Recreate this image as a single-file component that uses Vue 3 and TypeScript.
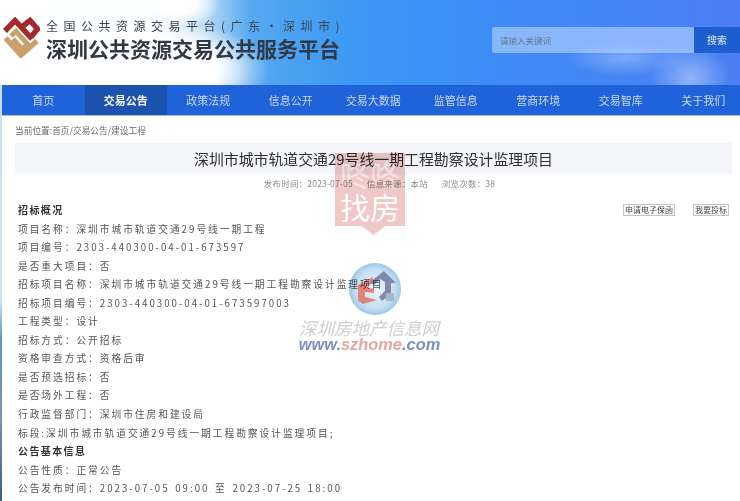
<script setup lang="ts">
const navItems = ['首页', '交易公告', '政策法规', '信息公开', '交易大数据', '监管信息', '营商环境', '交易智库', '关于我们']

const overview = [
  '项目名称：深圳市城市轨道交通29号线一期工程',
  '项目编号：2303-440300-04-01-673597',
  '是否重大项目：否',
  '招标项目名称：深圳市城市轨道交通29号线一期工程勘察设计监理项目',
  '招标项目编号：2303-440300-04-01-673597003',
  '工程类型：设计',
  '招标方式：公开招标',
  '资格审查方式：资格后审',
  '是否预选招标：否',
  '是否场外工程：否',
  '行政监督部门：深圳市住房和建设局',
  '标段:深圳市城市轨道交通29号线一期工程勘察设计监理项目;',
]

const notice = ['公告性质：正常公告', '公告发布时间：2023-07-05 09:00 至 2023-07-25 18:00']
</script>

<template>
  <div class="page">
    <header class="top">
      <div class="brand">
        <svg class="logo" width="38" height="42" viewBox="0 0 38 42" fill="none">
          <path d="M3 14 L13 3.5 L30 22" stroke="#a4282c" stroke-width="5.5" />
          <path d="M21 9 L28 3.5 L35.5 12 L29 20" stroke="#a4282c" stroke-width="5.5" />
          <path d="M3.5 21 L19 38 L35 24" stroke="#c9a06c" stroke-width="5.5" />
          <path d="M9 19 L14 14.5 L25.5 27 L20 32 L11 22" stroke="#c9a06c" stroke-width="5" />
        </svg>
        <div>
          <div class="brand-sub">全国公共资源交易平台(广东·深圳市)</div>
          <div class="brand-main">深圳公共资源交易公共服务平台</div>
        </div>
      </div>
      <div class="search">
        <div class="search-input">请输入关键词</div>
        <div class="search-btn">搜索</div>
      </div>
    </header>

    <div class="body">
      <nav class="nav">
        <a v-for="(item, i) in navItems" :key="item" :class="['nav-item', { active: i === 1 }]">{{ item }}</a>
      </nav>

      <main class="main">
        <div class="crumb">当前位置:首页/交易公告/建设工程</div>
        <h1 class="title">深圳市城市轨道交通29号线一期工程勘察设计监理项目</h1>
        <div class="meta">
          <span>发布时间：2023-07-05</span>
          <span>信息来源：本站</span>
          <span>浏览次数：38</span>
        </div>

        <div class="content">
          <div class="head-row">
            <div class="row strong">招标概况</div>
            <div class="actions">
              <span class="action">申请电子保函</span>
              <span class="action">我要投标</span>
            </div>
          </div>
          <div v-for="line in overview" :key="line" class="row">{{ line }}</div>
          <div class="row strong">公告基本信息</div>
          <div v-for="line in notice" :key="line" class="row">{{ line }}</div>
        </div>
      </main>
    </div>

    <!-- watermarks lie over the page -->
    <div class="shield">
      <span class="shield-small">咚咚</span>
      <span>找房</span>
    </div>
    <div class="badge">
      <svg width="52" height="52" viewBox="0 0 52 52">
        <defs>
          <radialGradient id="orb" cx="50%" cy="50%" r="50%">
            <stop offset="0%" stop-color="#eef5fb" />
            <stop offset="75%" stop-color="#c6dff1" />
            <stop offset="100%" stop-color="#9cc7e6" />
          </radialGradient>
        </defs>
        <circle cx="26" cy="26" r="26" fill="url(#orb)" />
        <path d="M9 22 L24 14 L24 20 L17 24 L25 26 L25 30 L16 29 L16 34 L28 37 L14 41 L9 38 Z" fill="#e0857c" />
        <path d="M21 19 L35 8 L47 20 L42 20 L42 31 L33 38 L30 34 L36 28 L36 19 L31 16 L25 22 Z" fill="#7d8cae" />
        <path d="M37 30 h8 v8 h-8 Z" fill="#a6b6c6" />
      </svg>
      <div class="badge-cn">深圳房地产信息网</div>
      <div class="badge-url">www.<em>szhome</em>.com</div>
    </div>
  </div>
</template>

<style scoped>
.page {
  position: relative;
  width: 740px;
  height: 501px;
  overflow: hidden;
  font-family: "Noto Sans CJK SC", "Noto Sans", sans-serif;
  background: linear-gradient(180deg, #bfe0f5 0, #cfe0f6 300px, #5f96c4 340px, #7c8fb0 420px, #3b5f80 501px);
  filter: blur(0.3px);
}

.top {
  height: 85px;
  display: flex;
  justify-content: space-between;
  align-items: flex-start;
  background:
    radial-gradient(ellipse 40px 34px at 690px 78px, rgba(255, 255, 255, 0.4), transparent),
    radial-gradient(ellipse 60px 18px at 625px 58px, rgba(255, 255, 255, 0.3), transparent),
    radial-gradient(ellipse 40px 24px at 180px 4px, #fff 40%, transparent),
    radial-gradient(ellipse 130px 52px at 140px 70px, #fff 60%, rgba(255, 255, 255, 0)),
    linear-gradient(90deg, #fff 0, #fbfdff 150px, #b9dcf6 205px, #56a8f0 250px, #3a97f3 360px, #3f8af6 520px, #4c7ff3 740px);
}

.brand {
  display: flex;
  align-items: flex-start;
  gap: 6px;
  padding: 17px 0 0 2px;
}

.logo {
  flex: none;
}

.brand-sub {
  font-size: 12px;
  line-height: 16px;
  margin-top: 1px;
  letter-spacing: 5.5px;
  color: #3c4650;
  white-space: nowrap;
}

.brand-main {
  font-size: 21px;
  line-height: 28px;
  font-weight: 700;
  color: #2f3a46;
  white-space: nowrap;
}

.search {
  display: flex;
  margin-top: 27px;
  height: 26px;
}

.search-input {
  width: 194px;
  padding-left: 8px;
  font-size: 8.5px;
  line-height: 26px;
  color: #66788f;
  background: rgba(180, 212, 255, 0.62);
  border-radius: 2px 0 0 2px;
}

.search-btn {
  width: 46px;
  font-size: 10px;
  line-height: 26px;
  text-align: center;
  color: #dfe9fa;
  background: #1e5fd0;
}

.body {
  margin-left: 2px;
  height: 416px;
  background: #fff;
}

.nav {
  display: flex;
  height: 30px;
  background: #2062d9;
  box-shadow: 0 1px 0 #a9bfdc;
}

.nav-item {
  flex: 0 0 82.5px;
  font-size: 11px;
  line-height: 30px;
  text-align: center;
  color: #c9d9f5;
}

.nav-item.active {
  font-weight: 700;
  color: #f4f7fd;
  background: #1b52ad;
}

.main {
  padding: 9px 8px 0 13px;
}

.crumb {
  font-size: 8.7px;
  line-height: 14px;
  color: #6a6a6a;
}

.title {
  margin: 5px 0 0;
  font-size: 14.9px;
  font-weight: 400;
  line-height: 31px;
  text-align: center;
  color: #2f2f2f;
  background: #f3f5f9;
}

.meta {
  display: flex;
  justify-content: center;
  gap: 14px;
  padding-left: 12px;
  font-size: 8.5px;
  line-height: 18px;
  letter-spacing: 0.2px;
  color: #8a8a8a;
}

.content {
  margin-top: 9px;
  padding: 0 3px;
}

.head-row {
  display: flex;
  justify-content: space-between;
  align-items: center;
}

.actions {
  display: flex;
  gap: 18px;
}

.action {
  padding: 0 1px;
  font-size: 8px;
  line-height: 10px;
  color: #444;
  border: 1px solid #c4c4c4;
}

.row {
  font-size: 9.7px;
  line-height: 18.55px;
  letter-spacing: 2px;
  word-spacing: 1.5px;
  color: #555;
  white-space: nowrap;
}

.row.strong {
  font-size: 10px;
  font-weight: 700;
  color: #333;
  letter-spacing: 1.4px;
}

.shield {
  position: absolute;
  left: 335px;
  top: 153px;
  width: 70px;
  height: 82px;
  display: flex;
  flex-direction: column;
  align-items: center;
  font-size: 30px;
  line-height: 33px;
  color: #fff;
  background: #f0c8c5;
  mix-blend-mode: multiply;
  clip-path: polygon(0 0, 100% 0, 100% 89%, 72% 89%, 55% 100%, 38% 89%, 0 89%);
}

.shield-small {
  margin-top: 4px;
  opacity: 0.55;
}

.badge {
  position: absolute;
  left: 279px;
  top: 263px;
  width: 190px;
  display: flex;
  flex-direction: column;
  align-items: center;
}

.badge svg {
  margin-left: 2px;
  mix-blend-mode: multiply;
}

.badge-cn {
  margin: 3px 10px 0 0;
  font-size: 17.5px;
  line-height: 19px;
  font-style: italic;
  color: #cfcfcf;
  white-space: nowrap;
}

.badge-url {
  margin-right: 9px;
  font-family: "Liberation Sans", sans-serif;
  font-size: 16.4px;
  line-height: 15px;
  font-weight: 700;
  font-style: italic;
  color: #7f8fc0;
  white-space: nowrap;
}

.badge-url em {
  color: #e9a6a6;
}
</style>
